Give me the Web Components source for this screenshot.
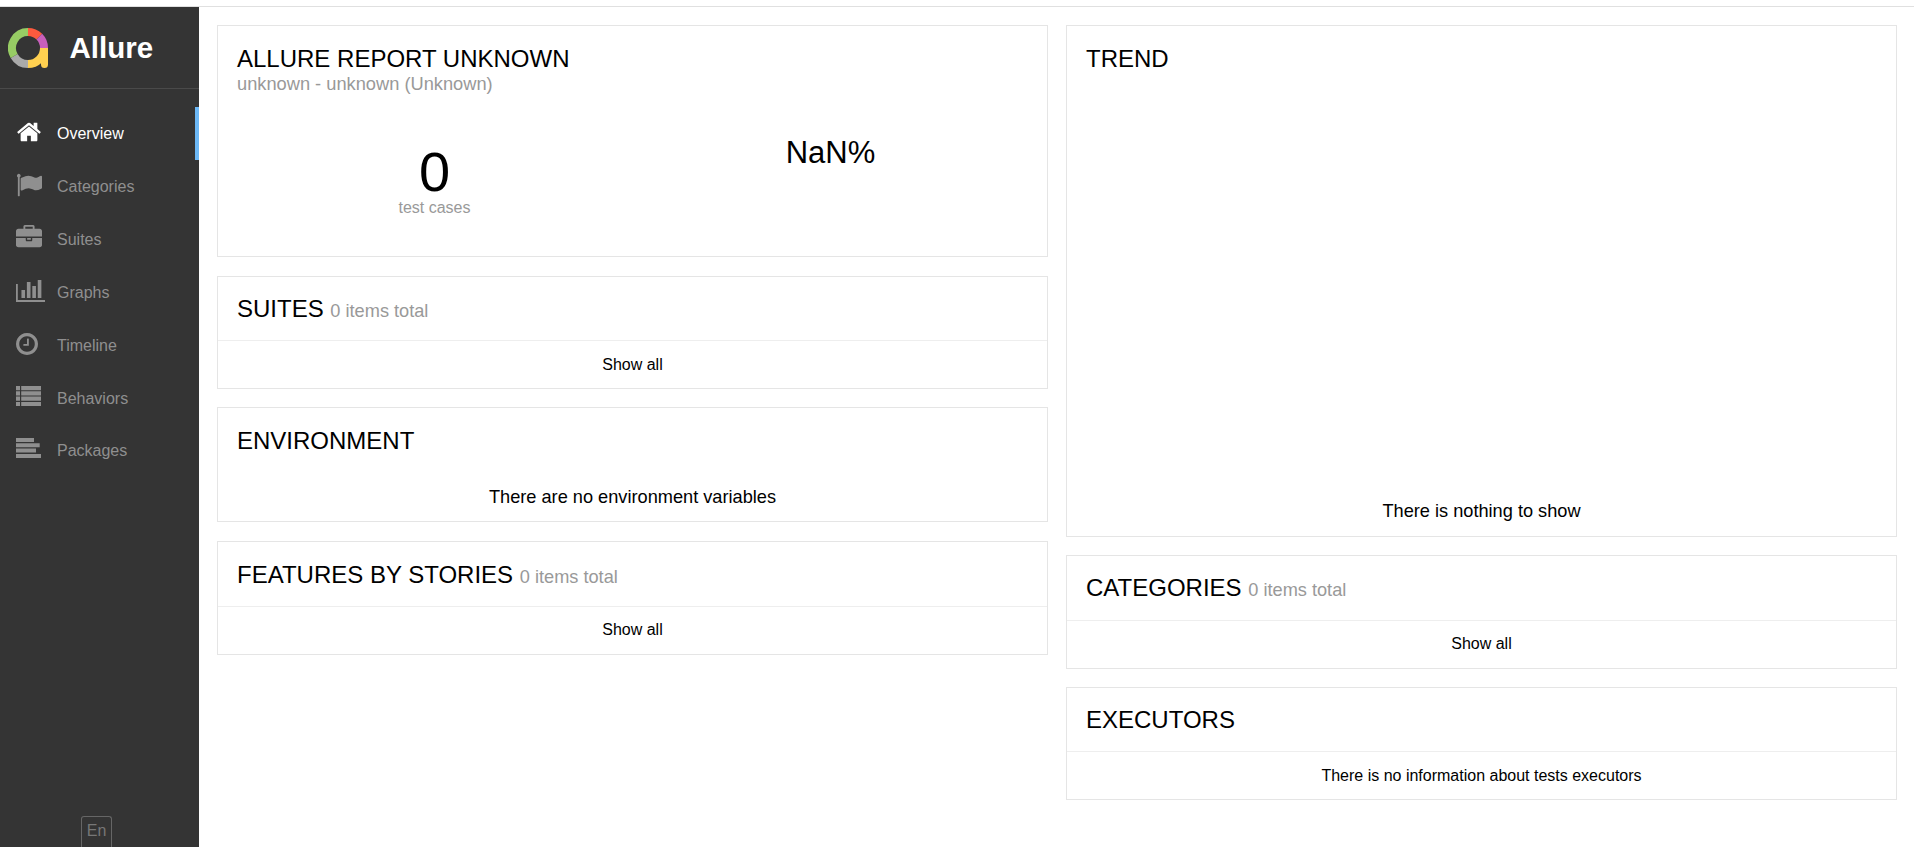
<!DOCTYPE html>
<html>
<head>
<meta charset="utf-8">
<title>Allure Report</title>
<style>
    html, body { margin: 0; height: 100%; background: #fff; }
    body { font-family: "Liberation Sans", Arial, sans-serif; overflow: hidden; }
</style>
</head>
<body>
<report-app>
    <side-nav slot="side">
        <nav-item icon="home" active>Overview</nav-item>
        <nav-item icon="flag">Categories</nav-item>
        <nav-item icon="briefcase">Suites</nav-item>
        <nav-item icon="chart">Graphs</nav-item>
        <nav-item icon="clock">Timeline</nav-item>
        <nav-item icon="list">Behaviors</nav-item>
        <nav-item icon="packages">Packages</nav-item>
    </side-nav>

    <widget-column slot="left">
        <summary-widget></summary-widget>
        <widget-card heading="SUITES" count="0 items total" style="--card-height: 112.9px"><show-all></show-all></widget-card>
        <widget-card heading="ENVIRONMENT" plain style="--card-height: 115.1px; --head-pad: 19px"><empty-note>There are no environment variables</empty-note></widget-card>
        <widget-card heading="FEATURES BY STORIES" count="0 items total" style="--card-height: 114px; --head-pad: 19px; --head-height: 65px; --foot-lift: 1px"><show-all></show-all></widget-card>
    </widget-column>

    <widget-column slot="right">
        <widget-card heading="TREND" plain style="--card-height: 511.5px; --head-pad: 19px; --foot-lift: 1px"><empty-note>There is nothing to show</empty-note></widget-card>
        <widget-card heading="CATEGORIES" count="0 items total" style="--card-height: 113.5px; --head-height: 65px; --foot-lift: 1px"><show-all></show-all></widget-card>
        <widget-card heading="EXECUTORS" style="--card-height: 113px"><empty-note small>There is no information about tests executors</empty-note></widget-card>
    </widget-column>
</report-app>

<script>
const ICONS = {
    home: `<svg viewBox="0 0 1792 1792"><path d="M1472 992v480q0 26-19 45t-45 19h-384v-384h-256v384h-384q-26 0-45-19t-19-45v-480q0-1 .5-3t.5-3l575-474 575 474q1 2 1 6zm223-69l-62 74q-8 9-21 11h-3q-13 0-21-7l-692-577-692 577q-12 8-24 7-13-2-21-11l-62-74q-8-10-7-23.500t11-21.500l719-599q32-26 76-26t76 26l244 204v-195q0-14 9-23t23-9h192q14 0 23 9t9 23v408l219 182q10 8 11 21.500t-7 23.500z"/></svg>`,
    flag: `<svg viewBox="0 0 1792 1792"><path d="M320 256q0 72-64 110v1266q0 13-9.500 22.500t-22.500 9.500h-64q-13 0-22.500-9.500t-9.500-22.500v-1266q-64-38-64-110 0-53 37.500-90.500t90.500-37.500 90.500 37.500 37.500 90.500zm1472 64v763q0 25-12.500 38.500t-39.500 27.500q-215 116-369 116-61 0-123.500-22t-108.500-48-115.500-48-142.500-22q-192 0-464 146-17 9-33 9-26 0-45-19t-19-45v-742q0-32 31-55 21-14 79-43 236-120 421-120 107 0 200 29t219 88q38 19 88 19 54 0 117.500-21t110-47 88-47 54.500-21q26 0 45 19t19 45z"/></svg>`,
    briefcase: `<svg viewBox="0 0 1792 1792"><path d="M640 256h512v-128h-512v128zm1152 640v480q0 66-47 113t-113 47h-1472q-66 0-113-47t-47-113v-480h672v160q0 26 19 45t45 19h320q26 0 45-19t19-45v-160h672zm-768 0v128h-256v-128h256zm768-480v384h-1792v-384q0-66 47-113t113-47h352v-160q0-40 28-68t68-28h576q40 0 68 28t28 68v160h352q66 0 113 47t47 113z"/></svg>`,
    chart: `<svg viewBox="0 256 2048 1408" preserveAspectRatio="none" style="width:29px;height:22px"><path d="M640 896v512h-256v-512h256zm384-512v1024h-256v-1024h256zm1024 1152v128h-2048v-1152h128v1024h1920zm-640-896v768h-256v-768h256zm384-384v1152h-256v-1152h256z"/></svg>`,
    clock: `<svg viewBox="0 0 1536 1536" style="width:22px;height:22px"><g transform="translate(-128 -128)"><path d="M1024 544v448q0 14-9 23t-23 9h-320q-14 0-23-9t-9-23v-64q0-14 9-23t23-9h224v-352q0-14 9-23t23-9h64q14 0 23 9t9 23zm416 352q0-148-73-273t-198-198-273-73-273 73-198 198-73 273 73 273 198 198 273 73 273-73 198-198 73-273zm224 0q0 209-103 385.500t-279.500 279.500-385.500 103-385.500-103-279.500-279.500-103-385.500 103-385.500 279.500-279.500 385.500-103 385.500 103 279.500 279.500 103 385.500z"/></g></svg>`,
    list: `<svg viewBox="0 0 25 20" style="width:25px;height:20px;transform:translateY(-1px)"><path d="M0 0h4v4.200h-4zM0 5.300h4v4.200h-4zM0 10.600h4v4.200h-4zM0 15.900h4v4.100h-4zM5.200 0h19.800v4.200h-19.800zM5.200 5.300h19.800v4.200h-19.800zM5.200 10.600h19.800v4.200h-19.800zM5.200 15.900h19.800v4.100h-19.800z"/></svg>`,
    packages: `<svg viewBox="0 0 25 20" style="width:25px;height:20px;transform:translateY(-1px)"><path d="M0 0h18v4h-18zM0 5.300h23.700v4h-23.700zM0 10.600h20v4h-20zM0 15.900h25v4h-25z"/></svg>`
};

const define = (name, css, html) => {
    class Element extends HTMLElement {
        constructor() {
            super();
            this.attachShadow({ mode: "open" });
        }

        connectedCallback() {
            this.shadowRoot.innerHTML = `<style>${css}</style>${typeof html === "function" ? html(this) : html}`;
        }
    }
    customElements.define(name, Element);
};

define("report-app", `
    :host { display: block; height: 100%; box-sizing: border-box; padding-top: 6px; }
    .wrap { height: 100%; box-sizing: border-box; border-top: 1px solid #e0e0e0; display: flex; }
    .side { flex: 0 0 199px; }
    main {
        flex: 1;
        display: grid;
        grid-template-columns: 831px 831px;
        column-gap: 18px;
        align-items: start;
        padding: 18px 0 0 18px;
    }
`, `
    <div class="wrap">
        <div class="side"><slot name="side"></slot></div>
        <main><slot name="left"></slot><slot name="right"></slot></main>
    </div>
`);

define("side-nav", `
    :host { display: flex; flex-direction: column; height: 100%; background: #343434; }
    header {
        display: flex;
        align-items: center;
        gap: 21.5px;
        height: 81px;
        padding-left: 8px;
        border-bottom: 1px solid #4a4a4a;
        color: #fff;
        font-size: 29.5px;
        font-weight: 700;
    }
    nav { flex: 1; padding-top: 18px; }
    footer { display: flex; justify-content: center; padding-right: 6px; }
    .lang {
        box-sizing: border-box;
        width: 31px;
        height: 31px;
        border: 1px solid #666;
        border-bottom: 0;
        border-radius: 3px 3px 0 0;
        color: #777;
        font-size: 16px;
        text-align: center;
        line-height: 27px;
    }
    svg { flex: none; display: block; }
`, `
    <header>
        <svg width="40" height="40" viewBox="0 0 40 40" fill="none" stroke-width="8">
            <path d="M20 4A16 16 0 0 1 31.310 8.690" stroke="#fd5a3e"/>
            <path d="M31.310 8.690A16 16 0 0 1 36 20" stroke="#c85fbb"/>
            <path d="M36 20A16 16 0 0 1 20 36" stroke="#ffd050"/>
            <path d="M32 20h8v16.500a3.500 3.500 0 0 1-7 0z" fill="#ffd050"/>
            <path d="M20 36A16 16 0 0 1 6.140 28" stroke="#aaa"/>
            <path d="M6.140 28A16 16 0 0 1 20 4" stroke="#97cc64"/>
        </svg>
        <span>Allure</span>
    </header>
    <nav><slot></slot></nav>
    <footer><div class="lang">En</div></footer>
`);

define("nav-item", `
    :host {
        display: flex;
        align-items: center;
        box-sizing: border-box;
        height: 52.85px;
        color: #8f8f8f;
        font-size: 16px;
        position: relative;
    }
    :host([active]) { color: #fff; }
    :host([active])::after {
        content: "";
        position: absolute;
        top: 0;
        bottom: 0;
        right: 0;
        width: 4px;
        background: #6cb8f6;
    }
    .icon { flex: 0 0 57px; padding-left: 16px; margin-top: -2px; box-sizing: border-box; display: flex; }
    .text { padding-top: 2px; }
    svg { width: 26px; height: 26px; fill: currentColor; display: block; flex: none; }
`, el => `<span class="icon">${ICONS[el.getAttribute("icon")]}</span><span class="text"><slot></slot></span>`);

define("widget-column", `
    :host { display: flex; flex-direction: column; gap: 18.5px; }
`, `<slot></slot>`);

define("summary-widget", `
    :host {
        display: block;
        box-sizing: border-box;
        height: 232px;
        margin-bottom: .5px;
        border: 1px solid #e5e5e5;
        padding: 19px 20px 0 19px;
    }
    h2 { margin: 0; font-size: 24px; font-weight: 400; line-height: 28px; color: #000; }
    .sub { color: #999; font-size: 18.25px; line-height: 20px; margin-top: 1px; }
    .stats { display: grid; grid-template-columns: 1fr 1fr; margin-top: 40px; text-align: center; }
    .total { padding-top: 12px; }
    .num { font-size: 56px; line-height: 52px; color: #000; }
    .label { font-size: 16px; line-height: 18px; color: #999; margin-top: 1px; }
    .pct { font-size: 31px; line-height: 38px; color: #000; padding-left: 2px; }
`, `
    <h2>ALLURE REPORT UNKNOWN</h2>
    <div class="sub">unknown - unknown (Unknown)</div>
    <div class="stats">
        <div class="total"><div class="num">0</div><div class="label">test cases</div></div>
        <div><div class="pct">NaN%</div></div>
    </div>
`);

define("widget-card", `
    :host {
        display: flex;
        flex-direction: column;
        box-sizing: border-box;
        height: var(--card-height, auto);
        border: 1px solid #e5e5e5;
    }
    .head {
        flex: none;
        box-sizing: border-box;
        height: var(--head-height, 64px);
        padding: var(--head-pad, 17.500px) 19px 0;
        border-bottom: 1px solid #eee;
    }
    :host([plain]) .head { border-bottom: 0; height: auto; }
    h2 { margin: 0; font-size: 24px; font-weight: 400; line-height: 28px; color: #000; }
    small { font-size: 18.2px; color: #999; }
    .body { flex: 1; display: flex; flex-direction: column; justify-content: flex-end; padding-bottom: var(--foot-lift, 0); }
`, el => `
    <div class="head"><h2>${el.getAttribute("heading")}${el.hasAttribute("count") ? ` <small>${el.getAttribute("count")}</small>` : ""}</h2></div>
    <div class="body"><slot></slot></div>
`);

define("show-all", `
    :host { display: block; height: 46px; line-height: 46px; text-align: center; font-size: 16px; color: #000; }
`, `Show all`);

define("empty-note", `
    :host { display: block; height: 47px; line-height: 47px; text-align: center; font-size: 18.2px; color: #000; }
    :host([small]) { font-size: 16px; }
`, `<slot></slot>`);
</script>
</body>
</html>
